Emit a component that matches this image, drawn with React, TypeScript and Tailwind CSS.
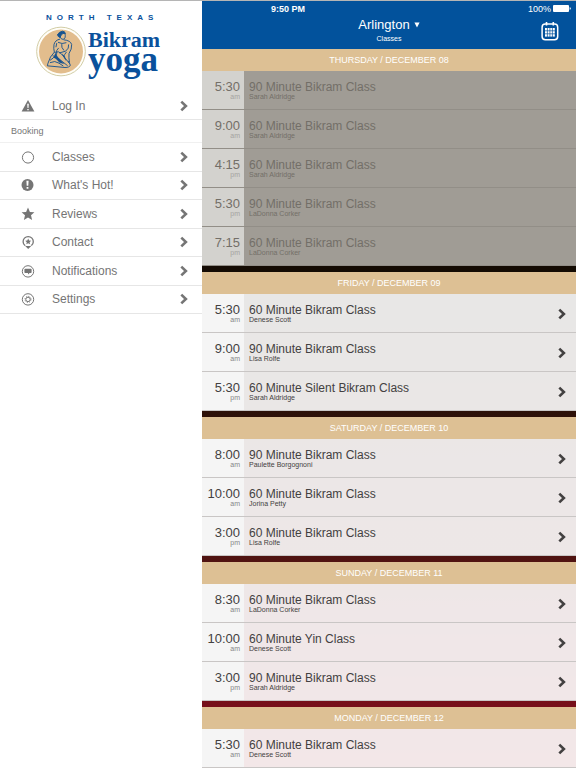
import React from 'react'

type YogaClass = {
  time: string
  period: string
  title: string
  teacher: string
}

type Day = {
  label: string
  past?: boolean
  classes: YogaClass[]
}

const days: Day[] = [
  {
    label: 'THURSDAY / DECEMBER 08',
    past: true,
    classes: [
      { time: '5:30', period: 'am', title: '90 Minute Bikram Class', teacher: 'Sarah Aldridge' },
      { time: '9:00', period: 'am', title: '60 Minute Bikram Class', teacher: 'Sarah Aldridge' },
      { time: '4:15', period: 'pm', title: '60 Minute Bikram Class', teacher: 'Sarah Aldridge' },
      { time: '5:30', period: 'pm', title: '90 Minute Bikram Class', teacher: 'LaDonna Corker' },
      { time: '7:15', period: 'pm', title: '60 Minute Bikram Class', teacher: 'LaDonna Corker' },
    ],
  },
  {
    label: 'FRIDAY / DECEMBER 09',
    classes: [
      { time: '5:30', period: 'am', title: '60 Minute Bikram Class', teacher: 'Denese Scott' },
      { time: '9:00', period: 'am', title: '90 Minute Bikram Class', teacher: 'Lisa Rolfe' },
      { time: '5:30', period: 'pm', title: '60 Minute Silent Bikram Class', teacher: 'Sarah Aldridge' },
    ],
  },
  {
    label: 'SATURDAY / DECEMBER 10',
    classes: [
      { time: '8:00', period: 'am', title: '90 Minute Bikram Class', teacher: 'Paulette Borgognoni' },
      { time: '10:00', period: 'am', title: '60 Minute Bikram Class', teacher: 'Jorina Petty' },
      { time: '3:00', period: 'pm', title: '60 Minute Bikram Class', teacher: 'Lisa Rolfe' },
    ],
  },
  {
    label: 'SUNDAY / DECEMBER 11',
    classes: [
      { time: '8:30', period: 'am', title: '60 Minute Bikram Class', teacher: 'LaDonna Corker' },
      { time: '10:00', period: 'am', title: '60 Minute Yin Class', teacher: 'Denese Scott' },
      { time: '3:00', period: 'pm', title: '90 Minute Bikram Class', teacher: 'Sarah Aldridge' },
    ],
  },
  {
    label: 'MONDAY / DECEMBER 12',
    classes: [
      { time: '5:30', period: 'am', title: '60 Minute Bikram Class', teacher: 'Denese Scott' },
    ],
  },
]

const Chevron: React.FC<{ className: string }> = ({ className }) => (
  <svg viewBox="0 0 8 12" className={className} fill="none" stroke="currentColor" strokeWidth="2.6" aria-hidden="true">
    <path d="M1.3 1.6 L5.9 6 L1.3 10.4" />
  </svg>
)

const WarningIcon = () => (
  <svg viewBox="0 0 14 14" className="size-3.5" aria-hidden="true">
    <path d="M7 1 L13.4 12.6 H0.6 Z" fill="currentColor" />
    <path d="M6.2 4.8 h1.6 l-.3 4.2 h-1 z M6.3 9.9 h1.4 v1.4 h-1.4 z" fill="#fff" />
  </svg>
)

const CircleIcon = () => (
  <svg viewBox="0 0 14 14" className="size-3.5" fill="none" stroke="currentColor" aria-hidden="true">
    <circle cx="7" cy="7.5" r="5.6" />
  </svg>
)

const AlertIcon = () => (
  <svg viewBox="0 0 14 14" className="size-3.5" aria-hidden="true">
    <circle cx="6.5" cy="7" r="6" fill="currentColor" />
    <path d="M5.4 2.8 h2.2 l-.3 5 h-1.6 z M5.6 8.9 h1.8 v1.9 h-1.8 z" fill="#fff" />
  </svg>
)

const StarIcon = () => (
  <svg viewBox="0 0 14 14" className="size-3.5" fill="currentColor" aria-hidden="true">
    <path d="M7 .6 L8.9 4.9 L13.4 5.3 L10 8.3 L11.1 12.9 L7 10.5 L2.9 12.9 L4 8.3 L.6 5.3 L5.1 4.9 Z" />
  </svg>
)

const PinIcon = () => (
  <svg viewBox="0 0 14 14" className="size-3.5" aria-hidden="true">
    <path d="M4 10.6 A5.1 5.1 0 1 1 10.4 10.6" fill="none" stroke="currentColor" strokeWidth="1.3" />
    <path d="M3.4 10.2 Q7.2 12 11 10.2 L7.2 14 Z" fill="currentColor" />
    <path d="M7.2 3.6 L8.1 5.6 L10.2 5.8 L8.6 7.2 L9.1 9.3 L7.2 8.2 L5.3 9.3 L5.8 7.2 L4.2 5.8 L6.3 5.6 Z" fill="currentColor" />
  </svg>
)

const MessageIcon = () => (
  <svg viewBox="0 0 14 14" className="size-3.5" aria-hidden="true">
    <circle cx="7" cy="7.4" r="5.7" fill="none" stroke="currentColor" />
    <path d="M4.2 4.8 h5.6 q.8 0 .8 .8 v2.6 q0 .8 -.8 .8 h-1.2 l-1.6 1.6 v-1.6 h-2.8 q-.8 0 -.8 -.8 v-2.6 q0 -.8 .8 -.8 z" fill="currentColor" />
  </svg>
)

const GearIcon = () => (
  <svg viewBox="0 0 14 14" className="size-3.5" fill="none" stroke="currentColor" aria-hidden="true">
    <circle cx="7" cy="7.4" r="5.7" />
    <circle cx="7" cy="7.4" r="2.2" strokeWidth="1" />
    <circle cx="7" cy="7.4" r="3" strokeWidth="1" strokeDasharray="1.1 1.256" />
  </svg>
)

const CalendarIcon = () => (
  <svg viewBox="0 0 18 20" className="h-5 w-[18px]" fill="none" stroke="currentColor" aria-hidden="true">
    <rect x="1.1" y="3" width="15.6" height="15.8" rx="3.2" strokeWidth="1.5" />
    <path d="M5.5 1 V4.6 M12.3 1 V4.6" strokeWidth="1.6" />
    <path d="M4 7 h9.8 v8.6 h-9.8 z" fill="currentColor" stroke="none" />
    <path d="M6.4 6.6 V16 M8.9 6.6 V16 M11.4 6.6 V16 M3.6 9.8 H14.2 M3.6 12.8 H14.2" stroke="#02529c" strokeWidth=".7" />
  </svg>
)

const Logo = () => (
  <div className="flex flex-col pt-3 pl-9 text-[#0a519c]">
    <p className="pl-[10px] text-[8px] leading-[10px] font-bold tracking-[5px] whitespace-nowrap">NORTH TEXAS</p>
    <div className="flex items-start pt-[3px]">
      <svg viewBox="107 79 150 152" className="h-[51px] w-[50px] shrink-0" aria-hidden="true">
        <circle cx="182" cy="155" r="73" fill="#fffef8" stroke="#d2cda6" strokeWidth="3" />
        <circle cx="182" cy="155" r="66" fill="#e2bd8d" />
        <g fill="none" stroke="#17538f" strokeWidth="2.8" strokeLinecap="round" strokeLinejoin="round">
          <path d="M194 101 Q196 108 194 114 Q191 120 185 118 Q180 116 179 111" />
          <path d="M172 105 Q175 96 186 94 Q194 94 195 101 Q187 99 183 105 L179 113 Q172 111 172 105 Z" fill="#17538f" />
          <path d="M178 118 Q164 121 161 134 Q159 146 162 157 M191 120 Q211 122 214 134 Q215 148 206 161 Q205 174 207 186" />
          <path d="M174 128 Q185 134 197 129 M184 134 Q182 143 190 151 M205 135 Q207 146 196 154 L178 159" />
          <path d="M162 157 Q148 170 143 190 L141 198 L194 203 Q208 203 210 196 L205 185" />
          <path d="M165 157 Q175 152 183 162 Q197 178 207 190 M158 168 Q169 169 177 178 L201 197 M150 188 Q164 181 176 190 L188 198" />
          <path d="M174 145 Q166 151 169 163 Q158 177 150 181 M198 157 Q192 165 190 169 M169 131 L167 141" />
        </g>
        <path d="M165 159 Q171 173 184 184 L192 193 L177 188 Q167 176 160 174 Z M184 160 L194 170 L198 184 Q190 174 184 160 Z" fill="#17538f" />
      </svg>
      <div className="flex flex-col pt-1 pl-0.5 font-['Liberation_Serif',serif] font-bold">
        <span className="text-[22px] leading-5">Bikram</span>
        <span className="text-[35px] leading-5">yoga</span>
      </div>
    </div>
  </div>
)

const MenuLink: React.FC<{ label: string; icon: React.ReactNode }> = ({ label, icon }) => (
  <a href="#" className="flex min-h-7 flex-1 items-center border-b border-[#e6e6e6] pr-[14px] pl-[21px]">
    {icon}
    <span className="flex-1 pl-[17px] text-[12px] leading-4">{label}</span>
    <Chevron className="h-3 w-2" />
  </a>
)

const ClassRow: React.FC<{ item: YogaClass; past?: boolean }> = ({ item, past }) => (
  <li>
    <a
      href="#"
      className={
        past
          ? 'flex h-[39px] border-b border-[#928e87] text-[#736f68]'
          : 'flex h-[39px] border-b border-[#c9c6c5] text-[#434141]'
      }
    >
      <div className={past ? 'w-[42px] bg-[#d3d2ce] pt-2.5 pr-1 text-right' : 'w-[42px] bg-[#f5f5f5] pt-2.5 pr-1 text-right'}>
        <p className="text-[13px] leading-3">{item.time}</p>
        <p className={past ? 'text-[7px] leading-2 text-[#a5a39f]' : 'text-[7px] leading-2 text-[#858585]'}>{item.period}</p>
      </div>
      <div className={past ? 'flex flex-1 items-center bg-[#a09c95] pr-2.5' : 'flex flex-1 items-center bg-white/90 pr-2.5'}>
        <div className="flex-1 self-start pt-2.5 pl-[5px]">
          <p className="text-[12px] leading-3">{item.title}</p>
          <p className="text-[7px] leading-2">{item.teacher}</p>
        </div>
        {!past && <Chevron className="mt-0.5 h-3 w-2" />}
      </div>
    </a>
  </li>
)

const App: React.FC = () => {
  return (
    <div className="flex min-h-screen border-y border-[#b5b5b5] bg-white font-['Liberation_Sans',Arial,sans-serif]">
      {/* Side menu */}
      <aside className="w-[202px] shrink-0 text-[#757575]">
        <div className="h-[91px]">
          <Logo />
        </div>
        <nav>
          <div className="flex h-7">
            <MenuLink label="Log In" icon={<WarningIcon />} />
          </div>
          <h2 className="border-b border-[#f0f0f0] pl-[11px] text-[9px] leading-[22px]">Booking</h2>
          <div className="flex h-[171px] flex-col">
            <MenuLink label="Classes" icon={<CircleIcon />} />
            <MenuLink label="What's Hot!" icon={<AlertIcon />} />
            <MenuLink label="Reviews" icon={<StarIcon />} />
            <MenuLink label="Contact" icon={<PinIcon />} />
            <MenuLink label="Notifications" icon={<MessageIcon />} />
            <MenuLink label="Settings" icon={<GearIcon />} />
          </div>
        </nav>
      </aside>

      {/* Schedule */}
      <main className="min-w-0 flex-1 bg-linear-to-b from-[#140b03] from-35% via-[#2f1109] via-55% to-[#870a1e]">
        <header className="h-12 bg-[#02529c] text-white">
          <div className="flex h-[15px] items-center justify-between pr-[5px] pl-[69px]">
            <span className="text-[9px] leading-3 font-bold">9:50 PM</span>
            <span className="flex items-center gap-0.5 text-[9px] leading-3">
              100%
              <svg viewBox="0 0 18 7" className="h-[7px] w-[18px]" fill="currentColor" aria-hidden="true">
                <rect width="16" height="7" rx="1" />
                <path d="M16.6 2.2 q1.2 .1 1.2 1.3 t-1.2 1.3 z" />
              </svg>
            </span>
          </div>
          <div className="grid grid-cols-[1fr_auto_1fr] items-center">
            <div className="col-start-2 flex flex-col items-center">
              <button type="button" className="flex items-center gap-1 pt-px text-[13px] leading-4">
                Arlington
                <svg viewBox="0 0 6 6" className="size-1.5" fill="currentColor" aria-hidden="true">
                  <path d="M.4 .4 h5.2 L3 5.6 z" />
                </svg>
              </button>
              <p className="text-[7px] leading-3">Classes</p>
            </div>
            <button type="button" aria-label="Open calendar" className="justify-self-end pr-[17px]">
              <CalendarIcon />
            </button>
          </div>
        </header>

        <div className="flex flex-col gap-1.5">
          {days.map((day) => (
            <section key={day.label}>
              <h2 className="bg-[#ddc094] text-center text-[9px] leading-[22px] text-white">{day.label}</h2>
              <ul>
                {day.classes.map((item, i) => (
                  <ClassRow key={i} item={item} past={day.past} />
                ))}
              </ul>
            </section>
          ))}
        </div>
      </main>
    </div>
  )
}

export default App
